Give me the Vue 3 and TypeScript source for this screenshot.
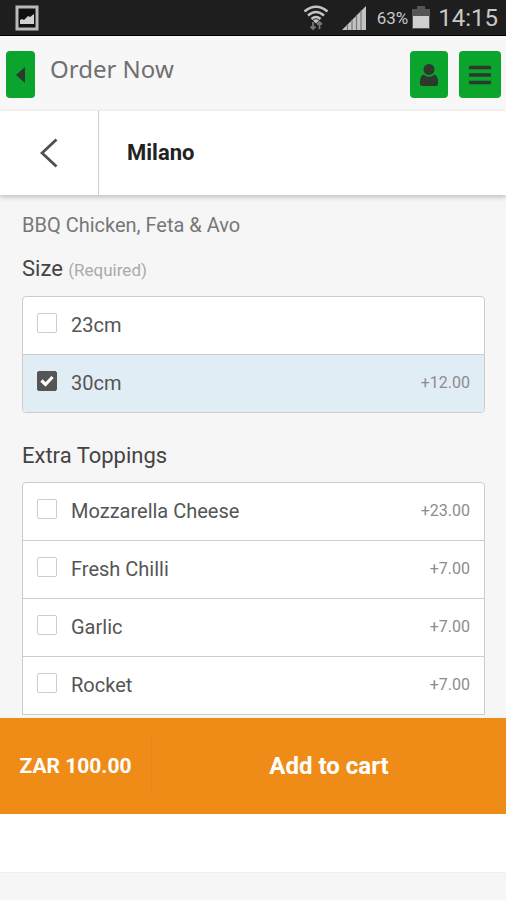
<script setup lang="ts">
import { ref } from 'vue'

interface Option {
  id: string
  name: string
  price?: string
}

interface OptionGroup {
  title: string
  note?: string
  options: Option[]
}

const groups: OptionGroup[] = [
  {
    title: 'Size',
    note: '(Required)',
    options: [
      { id: 'size-23', name: '23cm' },
      { id: 'size-30', name: '30cm', price: '+12.00' },
    ],
  },
  {
    title: 'Extra Toppings',
    options: [
      { id: 'mozzarella', name: 'Mozzarella Cheese', price: '+23.00' },
      { id: 'chilli', name: 'Fresh Chilli', price: '+7.00' },
      { id: 'garlic', name: 'Garlic', price: '+7.00' },
      { id: 'rocket', name: 'Rocket', price: '+7.00' },
    ],
  },
]

const selected = ref<string[]>(['size-30'])
</script>

<template>
  <div class="screen">
    <div class="status">
      <svg class="picture" width="24" height="26" viewBox="0 0 24 26" aria-hidden="true">
        <rect x="2" y="2" width="20" height="22" fill="#111" stroke="#b9b9b9" stroke-width="3" />
        <path d="M5 19v-4l2-1 2 1 4-4 2 1 4-3v10z" fill="#d0d0d0" />
      </svg>
      <div class="indicators">
        <svg width="26" height="27" viewBox="0 0 26 27" aria-hidden="true">
          <g fill="none" stroke="#c4c4c4" stroke-width="2.6">
            <path d="M1.500 7.500Q13-2 24.500 7.500" />
            <path d="M5 11.500Q13 4.500 21 11.500" />
            <path d="M8.500 15Q13 11 17.500 15" />
          </g>
          <path d="M10 16.500q3-2.500 6 0l-3 3z" fill="#c4c4c4" />
          <path d="M10 18v7M7.500 22.500 10 25l2.500-2.500M16.500 25v-7M14 20.500l2.500-2.500 2.500 2.500" fill="none" stroke="#777" stroke-width="1.800" />
        </svg>
        <svg class="signal" width="25" height="25" viewBox="0 0 25 25" aria-hidden="true">
          <path d="M0 25 24 1v24z" fill="#c2c2c2" />
          <path d="M5.500 19v6M10 14.500V25M14.500 10v15M19 5.500V25" stroke="#777" stroke-width="1.200" />
        </svg>
        <span class="percent">63%</span>
        <svg class="battery" width="18" height="23" viewBox="0 0 18 23" aria-hidden="true">
          <path d="M5 0h8v3h5v20H0V3h5z" fill="#555" />
          <path d="M1 10h16v12H1z" fill="#d0d0d0" />
        </svg>
        <span class="clock">14:15</span>
      </div>
    </div>

    <header class="header">
      <button class="green back" type="button" aria-label="Back">
        <svg width="10" height="16" viewBox="0 0 10 16"><path d="M9 0v16L0 8z" fill="#2c3a2c" /></svg>
      </button>
      <h1>Order Now</h1>
      <button class="green account" type="button" aria-label="Account">
        <svg width="20" height="24" viewBox="0 0 20 24">
          <circle cx="10" cy="6.500" r="5.500" fill="#2c3a2c" />
          <path d="M4.500 11.500Q10 16 15.500 11.500 19 13 19 18v3q0 2-2.500 2h-13Q1 23 1 21v-3q0-5 3.500-6.500z" fill="#2c3a2c" />
        </svg>
      </button>
      <button class="green menu" type="button" aria-label="Menu">
        <svg width="22" height="20" viewBox="0 0 22 20">
          <path d="M0 2.500h22M0 10h22M0 17.500h22" stroke="#2c3a2c" stroke-width="3.500" />
        </svg>
      </button>
    </header>

    <div class="product">
      <button class="previous" type="button" aria-label="Previous page">
        <svg width="18" height="30" viewBox="0 0 18 30">
          <path d="M16.500 1.500 2 15l14.500 13.500" fill="none" stroke="#505050" stroke-width="2.900" />
        </svg>
      </button>
      <h2>Milano</h2>
    </div>

    <main class="content">
      <p class="description">BBQ Chicken, Feta &amp; Avo</p>
      <fieldset v-for="group in groups" :key="group.title" class="group">
        <legend>
          {{ group.title }} <small v-if="group.note">{{ group.note }}</small>
        </legend>
        <div class="options">
          <label
            v-for="option in group.options"
            :key="option.id"
            class="option"
            :class="{ chosen: selected.includes(option.id) }"
          >
            <input v-model="selected" type="checkbox" :value="option.id" />
            <span class="box">
              <svg v-if="selected.includes(option.id)" width="14" height="12" viewBox="0 0 14 12" aria-hidden="true">
                <path d="M1.500 5.500 5.500 9.500 12.500 2" fill="none" stroke="#fff" stroke-width="3.200" />
              </svg>
            </span>
            <span class="name">{{ option.name }}</span>
            <span class="price">{{ option.price }}</span>
          </label>
        </div>
      </fieldset>
    </main>

    <button class="cart" type="button">
      <span class="total">ZAR 100.00</span>
      <span class="add">Add to cart</span>
    </button>
    <div class="spacer"></div>
  </div>
</template>

<style>
body {
  margin: 0;
  background: #f6f6f6;
}
</style>

<style scoped>
.screen {
  font-family: Roboto, 'Liberation Sans', sans-serif;
  color: #555;
  background: #f6f6f6;
}

button {
  border: 0;
  padding: 0;
  font-family: inherit;
  cursor: pointer;
}

h1,
h2,
p {
  margin: 0;
}

.status {
  display: flex;
  align-items: center;
  justify-content: space-between;
  height: 36px;
  padding: 0 8px 0 15px;
  background: #1e1e1e;
  border-bottom: 1px solid #000;
  box-sizing: border-box;
  color: #c8c8c8;
}

.indicators {
  display: flex;
  align-items: center;
}

.signal {
  margin-left: 13px;
}

.percent {
  margin-left: 10px;
  font-size: 17px;
}

.battery {
  margin-left: 4px;
}

.clock {
  margin-left: 8px;
  font-size: 24px;
}

.header {
  display: flex;
  align-items: flex-start;
  padding: 15px 5px 13px 6px;
  background: #f7f7f7;
}

.header h1 {
  flex: 1;
  margin-left: 15px;
  font-family: 'Noto Sans', 'Open Sans', sans-serif;
  font-size: 24px;
  font-weight: 400;
  line-height: 36px;
  color: #707070;
}

.green {
  display: flex;
  align-items: center;
  justify-content: center;
  height: 47px;
  border-radius: 4px;
  background: #0ba52e;
}

.back {
  width: 29px;
}

.account {
  width: 38px;
}

.menu {
  width: 42px;
  margin-left: 11px;
}

.product {
  position: relative;
  display: flex;
  align-items: stretch;
  height: 84px;
  background: #fff;
  box-shadow: 0 2px 5px rgba(0, 0, 0, 0.24);
}

.previous {
  display: flex;
  align-items: center;
  justify-content: center;
  width: 99px;
  border-right: 1px solid #ccc;
  background: transparent;
}

.product h2 {
  margin-left: 28px;
  font-size: 22px;
  font-weight: 700;
  line-height: 84px;
  color: #222;
}

.content {
  padding: 18px 21px 3px 22px;
}

.description {
  font-size: 20px;
  line-height: 24px;
  color: #777;
}

.group {
  min-width: 0;
  margin: 0;
  padding: 0;
  border: 0;
}

.group legend {
  padding: 16px 0 10px;
  font-size: 22px;
  line-height: 31px;
  color: #444;
}

.group + .group legend {
  padding: 27px 0 11px;
}

.group small {
  font-size: 17px;
  color: #aaa;
}

.options {
  border: 1px solid #ccc;
  border-radius: 4px;
  background: #fff;
  overflow: hidden;
}

.group:last-child .options {
  border-radius: 4px 4px 0 0;
}

.option {
  position: relative;
  display: flex;
  align-items: center;
  height: 57px;
  padding: 0 14px 2px;
  box-sizing: border-box;
  cursor: pointer;
}

.option + .option {
  height: 58px;
  border-top: 1px solid #ccc;
}

.chosen {
  background: #e1edf5;
}

.option input {
  position: absolute;
  opacity: 0;
}

.box {
  display: flex;
  align-items: center;
  justify-content: center;
  width: 20px;
  height: 20px;
  margin-bottom: 4px;
  border: 1px solid #ccc;
  border-radius: 2px;
  background: #fff;
  box-sizing: border-box;
}

.chosen .box {
  border-color: #555;
  background: #555;
}

.name {
  flex: 1;
  margin-left: 14px;
  font-size: 20px;
}

.price {
  font-size: 16px;
  color: #8c8c8c;
}

.cart {
  display: flex;
  align-items: center;
  width: 100%;
  height: 96px;
  background: #ef8c17;
  color: #fff;
  font-weight: 700;
}

.total {
  width: 151px;
  border-right: 1px solid #e5841a;
  font-size: 21px;
  line-height: 56px;
}

.add {
  flex: 1;
  font-size: 24px;
}

.spacer {
  height: 58px;
  border-bottom: 1px solid #eee;
  background: #fff;
}
</style>
